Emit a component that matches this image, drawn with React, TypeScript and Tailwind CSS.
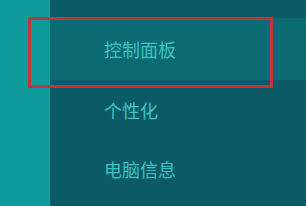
export default function App() {
  const items = [
    { label: "控制面板", active: true, h: "h-[62px]" },
    { label: "个性化", active: false, h: "h-[60px]" },
    { label: "电脑信息", active: false, h: "h-[58px]" },
  ];

  return (
    <div
      className="relative flex h-[206px] w-[306px] overflow-hidden bg-[#0b5a66]"
      style={{ fontFamily: '"Noto Sans CJK SC", "Noto Sans", sans-serif' }}
    >
      {/* left accent strip */}
      <div className="w-[50px] shrink-0 bg-[#0f9a9b]" />

      {/* menu panel */}
      <div className="flex flex-1 flex-col pt-[18px]">
        {items.map((item) => (
          <div
            key={item.label}
            className={`flex items-center pl-[54px] text-[18px] text-[#3ec3c6] ${item.h} ${
              item.active ? "bg-[#0b6a72]" : ""
            }`}
          >
            {item.label}
          </div>
        ))}
      </div>

      {/* red annotation box */}
      <div className="pointer-events-none absolute left-[28px] top-[17px] h-[71px] w-[245px] border-[3px] border-[#c2333a]" />
    </div>
  );
}
